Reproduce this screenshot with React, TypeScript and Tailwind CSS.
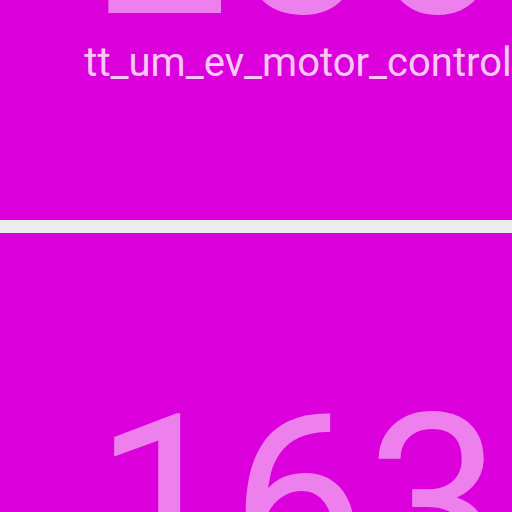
export default function App() {
	return (
		<main className="h-[512px] w-[512px] overflow-hidden bg-[#ececec] font-['Roboto',sans-serif]">
			<div className="flex w-[596px] flex-col gap-[13px]">
				<section className="flex h-[220px] flex-col items-center justify-end overflow-hidden bg-[#dc00dc] pb-[137px]">
					<div className="text-[242px] leading-[200px] text-[#ee80ee]">256</div>
					<div className="mt-[13px] text-[40px] leading-none text-[#f8c8f8]">
						tt_um_ev_motor_control
					</div>
				</section>

				<section className="flex h-[400px] flex-col items-center overflow-hidden bg-[#dc00dc] pt-[170px]">
					<div className="text-[242px] leading-[200px] text-[#ee80ee]">163</div>
				</section>
			</div>
		</main>
	);
}
